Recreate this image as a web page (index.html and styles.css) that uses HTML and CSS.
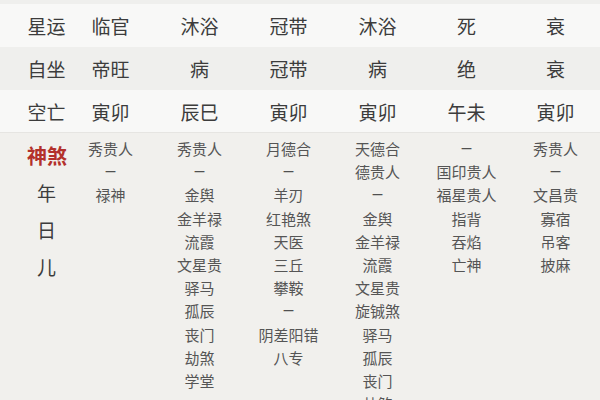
FILE: index.html
```html
<!DOCTYPE html>
<html lang="zh">
<head>
<meta charset="utf-8">
<link rel="stylesheet" href="styles.css">
</head>
<body>
<div class="table">
  <div class="row row-light row-first">
    <div class="label">星运</div>
    <div class="cell">临官</div><div class="cell">沐浴</div><div class="cell">冠带</div>
    <div class="cell">沐浴</div><div class="cell">死</div><div class="cell">衰</div>
  </div>
  <div class="row row-dark">
    <div class="label">自坐</div>
    <div class="cell">帝旺</div><div class="cell">病</div><div class="cell">冠带</div>
    <div class="cell">病</div><div class="cell">绝</div><div class="cell">衰</div>
  </div>
  <div class="row row-light row-last">
    <div class="label">空亡</div>
    <div class="cell">寅卯</div><div class="cell">辰巳</div><div class="cell">寅卯</div>
    <div class="cell">寅卯</div><div class="cell">午未</div><div class="cell">寅卯</div>
  </div>
  <div class="shensha">
    <div class="side">
      <div class="side-title">神煞</div>
      <div class="side-item">年</div>
      <div class="side-item">日</div>
      <div class="side-item">儿</div>
    </div>
    <ul class="list">
      <li>秀贵人</li><li class="dash">—</li><li>禄神</li>
    </ul>
    <ul class="list">
      <li>秀贵人</li><li class="dash">—</li><li>金舆</li><li>金羊禄</li><li>流霞</li><li>文星贵</li><li>驿马</li><li>孤辰</li><li>丧门</li><li>劫煞</li><li>学堂</li>
    </ul>
    <ul class="list">
      <li>月德合</li><li class="dash">—</li><li>羊刃</li><li>红艳煞</li><li>天医</li><li>三丘</li><li>攀鞍</li><li class="dash">—</li><li>阴差阳错</li><li>八专</li>
    </ul>
    <ul class="list">
      <li>天德合</li><li>德贵人</li><li class="dash">—</li><li>金舆</li><li>金羊禄</li><li>流霞</li><li>文星贵</li><li>旋铖煞</li><li>驿马</li><li>孤辰</li><li>丧门</li><li>劫煞</li>
    </ul>
    <ul class="list">
      <li class="dash">—</li><li>国印贵人</li><li>福星贵人</li><li>指背</li><li>吞焰</li><li>亡神</li>
    </ul>
    <ul class="list">
      <li>秀贵人</li><li class="dash">—</li><li>文昌贵</li><li>寡宿</li><li>吊客</li><li>披麻</li>
    </ul>
  </div>
</div>
</body>
</html>
```
FILE: styles.css
```css
html, body {
  margin: 0;
  padding: 0;
}
body {
  width: 600px;
  height: 400px;
  overflow: hidden;
  background: #f1f0ed;
  font-family: "Noto Sans CJK SC", "Noto Sans", sans-serif;
}
.table {
  padding-top: 4px;
  background: #efefed;
}
.row {
  display: grid;
  grid-template-columns: 66px repeat(6, 1fr);
  align-items: center;
  font-size: 19px;
  color: #3c3c3c;
}
.row-light { background: #f8f8f7; }
.row-dark { background: #efefed; }
.row-first { height: 43px; }
.row-dark { height: 43px; }
.row-last { height: 41px; border-bottom: 1px solid #e6e5e2; padding-top: 1px; }
.label {
  padding-left: 27px;
  width: 39px;
  text-align: center;
  white-space: nowrap;
}
.cell {
  text-align: center;
}
.shensha {
  display: grid;
  grid-template-columns: 66px repeat(6, 1fr);
  background: #f1f0ed;
  padding-top: 4px;
  height: 300px;
}
.side {
  padding-left: 27px;
  width: 39px;
  text-align: center;
  font-size: 19px;
  line-height: 37px;
  color: #3c3c3c;
  white-space: nowrap;
}
.side-title {
  color: #b3312b;
  font-weight: bold;
  font-size: 20px;
}
.list {
  list-style: none;
  margin: 0;
  padding: 0;
  text-align: center;
  font-size: 15px;
  line-height: 23.2px;
  color: #555;
  white-space: nowrap;
}
.list .dash {
  font-family: "DejaVu Sans", sans-serif;
  font-weight: bold;
  font-size: 11px;
  color: #505050;
}
```
